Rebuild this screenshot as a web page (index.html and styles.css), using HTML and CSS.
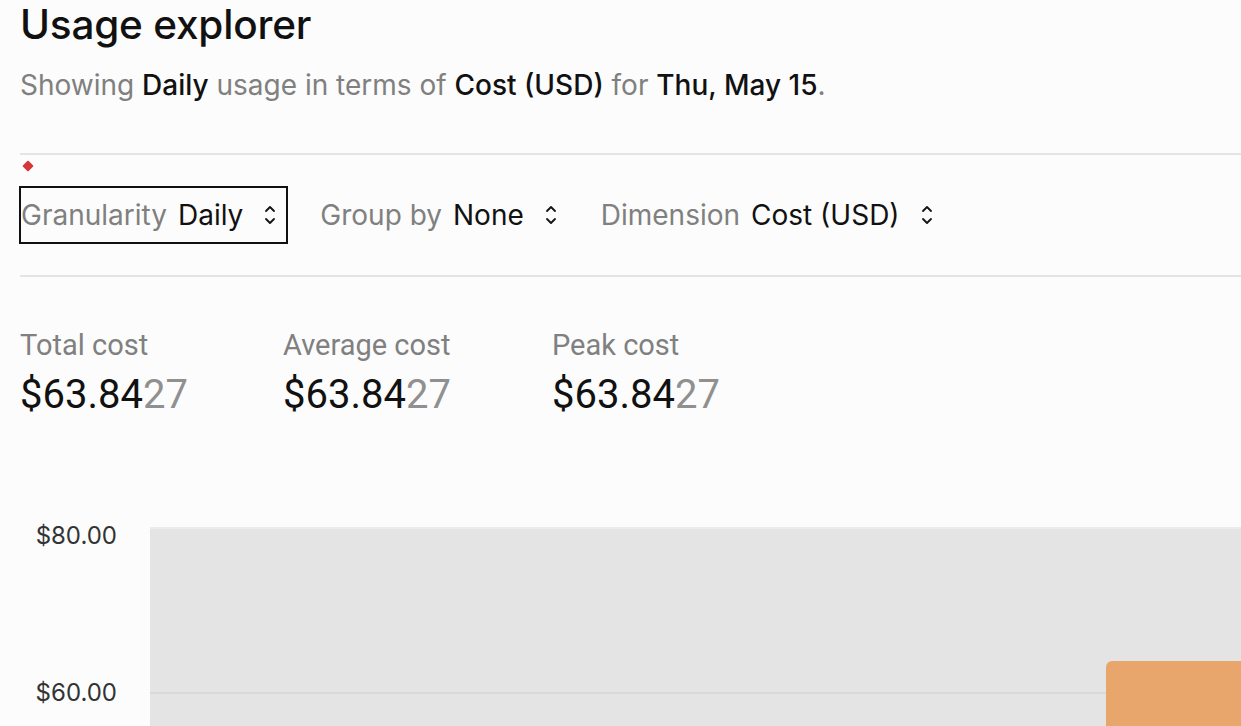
FILE: index.html
```html
<!DOCTYPE html>
<html>
<head>
<meta charset="utf-8">
<link rel="stylesheet" href="styles.css">
</head>
<body>
<div class="page">
  <h1 class="title">Usage explorer</h1>
  <p class="subtitle">Showing <b>Daily</b> usage in terms of <b>Cost (USD)</b> for <b>Thu, May 15</b>.</p>
  <div class="divider"></div>
  <div class="marker-row"><span class="marker"></span></div>
  <div class="filters">
    <div class="filter active">
      <span class="f-label">Granularity</span>
      <span class="f-value">Daily</span>
      <svg class="chev" viewBox="0 0 12 22" width="12" height="22"><path d="M2 7 L6 3 L10 7 M2 15 L6 19 L10 15" fill="none" stroke="#111" stroke-width="1.8" stroke-linecap="round" stroke-linejoin="round"/></svg>
    </div>
    <div class="filter">
      <span class="f-label">Group by</span>
      <span class="f-value">None</span>
      <svg class="chev" viewBox="0 0 12 22" width="12" height="22"><path d="M2 7 L6 3 L10 7 M2 15 L6 19 L10 15" fill="none" stroke="#111" stroke-width="1.8" stroke-linecap="round" stroke-linejoin="round"/></svg>
    </div>
    <div class="filter">
      <span class="f-label">Dimension</span>
      <span class="f-value">Cost (USD)</span>
      <svg class="chev" viewBox="0 0 12 22" width="12" height="22"><path d="M2 7 L6 3 L10 7 M2 15 L6 19 L10 15" fill="none" stroke="#111" stroke-width="1.8" stroke-linecap="round" stroke-linejoin="round"/></svg>
    </div>
  </div>
  <div class="divider"></div>
  <div class="stats">
    <div class="stat">
      <div class="s-label">Total cost</div>
      <div class="s-value">$63.84<span class="dim">27</span></div>
    </div>
    <div class="stat">
      <div class="s-label">Average cost</div>
      <div class="s-value">$63.84<span class="dim">27</span></div>
    </div>
    <div class="stat">
      <div class="s-label">Peak cost</div>
      <div class="s-value">$63.84<span class="dim">27</span></div>
    </div>
  </div>
  <div class="chart">
    <div class="y-axis">
      <span class="tick t80">$80.00</span>
      <span class="tick t60">$60.00</span>
    </div>
    <div class="plot">
      <div class="grid g60"></div>
      <div class="bar"></div>
    </div>
  </div>
</div>
</body>
</html>
```

FILE: styles.css
```css
html, body {
  margin: 0;
  padding: 0;
  background: #fcfcfc;
  overflow: hidden;
}
body {
  font-family: Inter, "Noto Sans", sans-serif;
  color: #111;
  width: 1241px;
  height: 726px;
}
.page {
  padding-left: 20px;
}
.title {
  margin: 0;
  font-size: 40.5px;
  line-height: 50px;
  font-weight: 500;
  color: #111;
  letter-spacing: -0.2px;
}
.subtitle {
  margin: 10px 0 0 0;
  font-size: 28px;
  line-height: 50px;
  color: #808080;
}
.subtitle b {
  font-weight: 500;
  color: #111;
}
.divider {
  height: 2px;
  background: #e4e4e4;
}
.subtitle + .divider {
  margin-top: 43px;
}
.marker-row {
  height: 31px;
  position: relative;
}
.marker {
  position: absolute;
  left: 4px;
  top: 7px;
  width: 8px;
  height: 8px;
  background: #d6353a;
  border-radius: 1px;
  transform: rotate(45deg);
}
.filters {
  display: flex;
  align-items: center;
  gap: 30px;
  margin-left: -1px;
}
.filter {
  display: flex;
  align-items: center;
  height: 58px;
  box-sizing: border-box;
  border: 2px solid transparent;
  padding-right: 10px;
  font-size: 28px;
}
.filter.active {
  border-color: #111;
}
.f-label {
  color: #808080;
  margin-right: 11px;
}
.f-value {
  color: #111;
  margin-right: 21px;
}
.chev {
  display: block;
}
.filters + .divider {
  margin-top: 31px;
}
.stats {
  display: flex;
  margin-top: 51px;
  font-family: Roboto, "Liberation Sans", sans-serif;
}
.stat:nth-child(1) { width: 263px; }
.stat:nth-child(2) { width: 269px; }
.s-label {
  font-size: 29px;
  line-height: 34px;
  color: #808080;
}
.s-value {
  margin-top: 11px;
  font-size: 40px;
  line-height: 44px;
  color: #111;
}
.dim {
  color: #909090;
}
.chart {
  display: flex;
  margin-top: 110px;
  margin-left: -20px;
  height: 300px;
}
.y-axis {
  width: 150px;
  position: relative;
  flex: none;
}
.tick {
  position: absolute;
  right: 33px;
  font-size: 24px;
  color: #333;
  line-height: 26px;
}
.t80 { top: -4px; }
.t60 { top: 153px; }
.plot {
  flex: 1;
  background: #e4e4e4;
  border-top: 2px solid #ececec;
  position: relative;
}
.grid {
  position: absolute;
  left: 0;
  right: 0;
  height: 2px;
  background: #d9d9d9;
}
.g60 { top: 163px; }
.bar {
  position: absolute;
  left: 956px;
  right: -20px;
  top: 132px;
  bottom: 0;
  background: #e8a66c;
  border-radius: 6px 6px 0 0;
}
```
